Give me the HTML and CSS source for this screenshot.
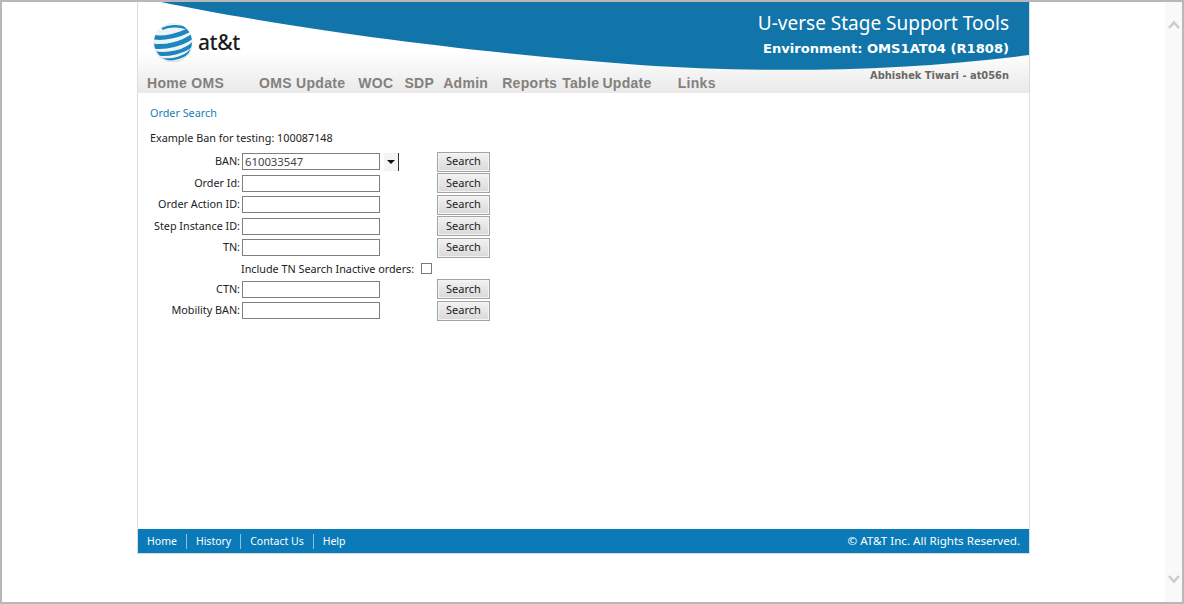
FILE: index.html
```html
<!DOCTYPE html>
<html lang="en">
<head>
  <meta charset="UTF-8">
  <title>U-verse Stage Support Tools | Order Search</title>
  <link rel="stylesheet" href="styles.css">
</head>
<body>
  <div class="window">
    <div class="viewport">
      <div class="page">
        <header class="masthead">
          <svg class="swoosh" viewBox="0 0 891 70" width="891" height="70" aria-hidden="true">
            <path d="M23 0C130 22 300 48 502 63C620 71 760 70 891 53L891 0Z" fill="#1275a9"/>
          </svg>
          <div class="masthead-top">
            <div class="logo">
              <svg class="globe" viewBox="0 0 40 40" width="40" height="40" aria-hidden="true">
                <defs>
                  <clipPath id="globe-clip"><circle cx="20" cy="20" r="19"/></clipPath>
                </defs>
                <circle cx="20" cy="21" r="19.5" fill="#dfe3e6"/>
                <circle cx="20" cy="20" r="19" fill="#eef3f6"/>
                <g clip-path="url(#globe-clip)" fill="none" stroke="#1b86bf">
                  <path d="M9 7C15 4 25 3 33 6" stroke-width="2.5"/>
                  <path d="M0 15C10 17 26 14 38 7" stroke-width="4.5"/>
                  <path d="M0 24C12 26 30 22 41 13" stroke-width="5"/>
                  <path d="M1 31C14 34 32 30 41 21" stroke-width="4"/>
                  <path d="M9 37C20 39 32 35 38 28" stroke-width="2.5"/>
                </g>
              </svg>
              <span class="logo-text">at&amp;t</span>
            </div>
            <div class="titles">
              <div class="app-title">U-verse Stage Support Tools</div>
              <div class="env-title">Environment: OMS1AT04 (R1808)</div>
            </div>
          </div>
          <div class="masthead-bottom">
            <nav class="main-nav">
              <a class="nav-home">Home OMS</a>
              <a class="nav-update">OMS Update</a>
              <a class="nav-woc">WOC</a>
              <a class="nav-sdp">SDP</a>
              <a class="nav-admin">Admin</a>
              <a class="nav-reports">Reports</a>
              <a class="nav-table">Table Update</a>
              <a>Links</a>
            </nav>
            <div class="user-name">Abhishek Tiwari - at056n</div>
          </div>
        </header>

        <main class="content">
          <h1 class="page-title">Order Search</h1>
          <p class="example">Example Ban for testing: 100087148</p>

          <form class="search-form">
            <div class="form-row">
              <label class="field-label">BAN:</label>
              <input class="field-input" type="text" value="610033547">
              <span class="drop-btn"><span class="drop-arrow"></span></span>
              <button class="search-btn" type="button">Search</button>
            </div>
            <div class="form-row">
              <label class="field-label">Order Id:</label>
              <input class="field-input" type="text">
              <button class="search-btn" type="button">Search</button>
            </div>
            <div class="form-row">
              <label class="field-label">Order Action ID:</label>
              <input class="field-input" type="text">
              <button class="search-btn" type="button">Search</button>
            </div>
            <div class="form-row">
              <label class="field-label">Step Instance ID:</label>
              <input class="field-input" type="text">
              <button class="search-btn" type="button">Search</button>
            </div>
            <div class="form-row">
              <label class="field-label">TN:</label>
              <input class="field-input" type="text">
              <button class="search-btn" type="button">Search</button>
            </div>
            <div class="form-row check-row">
              <label class="check-label">Include TN Search Inactive orders:</label>
              <span class="check-box"></span>
            </div>
            <div class="form-row">
              <label class="field-label">CTN:</label>
              <input class="field-input" type="text">
              <button class="search-btn" type="button">Search</button>
            </div>
            <div class="form-row">
              <label class="field-label">Mobility BAN:</label>
              <input class="field-input" type="text">
              <button class="search-btn" type="button">Search</button>
            </div>
          </form>
        </main>

        <footer class="site-footer">
          <ul class="footer-links">
            <li>Home</li>
            <li>History</li>
            <li>Contact Us</li>
            <li>Help</li>
          </ul>
          <div class="copyright">© AT&amp;T Inc. All Rights Reserved.</div>
        </footer>
      </div>
    </div>

    <div class="scrollbar">
      <svg viewBox="0 0 12 9" width="12" height="9" aria-hidden="true"><path d="M1 8L6 2.5L11 8" fill="none" stroke="#cccccc" stroke-width="2.6"/></svg>
      <svg viewBox="0 0 12 9" width="12" height="9" aria-hidden="true"><path d="M1 1L6 6.5L11 1" fill="none" stroke="#cccccc" stroke-width="2.6"/></svg>
    </div>
  </div>
</body>
</html>
```

FILE: styles.css
```css
/* Outer window frame */
html, body {
  margin: 0;
  padding: 0;
  height: 100%;
  overflow: hidden;
}
body {
  background-color: #fff;
  color: #222;
  font-family: "Noto Sans", "Open Sans", sans-serif;
  font-size: 10.8px;
}
.window {
  box-sizing: border-box;
  height: 604px;
  border: 2px solid #b8b8b8;
  display: flex;
}
.viewport {
  flex: 1;
  padding-left: 135px;
}
.scrollbar {
  width: 17px;
  background-color: #f9f9f9;
  display: flex;
  flex-direction: column;
  justify-content: space-between;
  align-items: center;
  padding: 18px 0;
  box-sizing: border-box;
}

/* Page box */
.page {
  box-sizing: content-box;
  width: 891px;
  height: 551px;
  border: 1px solid #dcdcdc;
  border-top: none;
  display: flex;
  flex-direction: column;
}

/* Header with the blue swoosh */
.masthead {
  position: relative;
  height: 91px;
  background: linear-gradient(to bottom, #fff 0, #fff 50px, #e9e9e9 91px);
  display: flex;
  flex-direction: column;
}
.swoosh {
  position: absolute;
  top: 0;
  left: 0;
}
.masthead-top {
  position: relative;
  height: 65px;
  display: flex;
  justify-content: space-between;
}
.logo {
  display: flex;
  align-items: center;
  padding: 19px 0 0 15px;
  height: 42px;
}
.logo-text {
  margin-left: 5px;
  font-size: 21px;
  font-weight: 500;
  color: #1c1c1c;
  letter-spacing: -0.4px;
}
.titles {
  text-align: right;
  padding: 8px 20px 0 0;
  color: #fff;
}
.app-title {
  font-size: 19px;
  line-height: 27px;
}
.env-title {
  font-family: "DejaVu Sans", sans-serif;
  font-size: 13.1px;
  font-weight: bold;
  line-height: 23px;
}
.masthead-bottom {
  position: relative;
  flex: 1;
  display: flex;
  justify-content: space-between;
}
.main-nav {
  display: flex;
  padding: 8px 0 0 9px;
  font-family: "Liberation Sans", Arial, sans-serif;
  font-size: 14px;
  font-weight: bold;
  letter-spacing: 0.3px;
  color: #83807d;
}
.nav-home { margin-right: 35px; }
.nav-update { margin-right: 13px; }
.nav-woc { margin-right: 11px; }
.nav-sdp { margin-right: 9px; }
.nav-admin { margin-right: 14px; }
.nav-reports { margin-right: 5px; }
.nav-table { margin-right: 26px; word-spacing: -1px; }
.user-name {
  font-family: "DejaVu Sans", sans-serif;
  font-size: 9.9px;
  font-weight: bold;
  color: #6b6766;
  padding: 3px 20px 0 0;
}

/* Main content */
.content {
  flex: 1;
  padding: 0 0 0 12px;
}
.page-title {
  margin: 12px 0 0;
  font-size: 10.8px;
  font-weight: normal;
  line-height: 15px;
  color: #1a7db5;
}
.example {
  margin: 10px 0 0;
  line-height: 15px;
}
.search-form {
  margin-top: 6px;
}
.form-row {
  display: flex;
  align-items: flex-start;
  height: 21.5px;
  position: relative;
}
.check-row {
  height: 20px;
}
.field-label {
  width: 90px;
  text-align: right;
  line-height: 19px;
  white-space: nowrap;
}
.check-label {
  margin-left: 91px;
  width: 180px;
  line-height: 19px;
  white-space: nowrap;
}
.field-input {
  box-sizing: border-box;
  width: 138px;
  height: 17px;
  margin: 2px 0 0 2px;
  padding: 0 1px 0 2px;
  border: 1px solid #7f7f7f;
  border-radius: 0;
  outline: none;
  font-family: inherit;
  font-size: 11.3px;
  color: #444;
}
.drop-btn {
  box-sizing: border-box;
  position: absolute;
  left: 234px;
  top: 2px;
  width: 15px;
  height: 18px;
  border-right: 1px solid #333;
  background-color: #f4f4f4;
  display: flex;
  align-items: center;
  justify-content: center;
}
.drop-arrow {
  width: 0;
  height: 0;
  border-left: 4px solid transparent;
  border-right: 4px solid transparent;
  border-top: 4px solid #111;
}
.search-btn {
  box-sizing: border-box;
  position: absolute;
  left: 287px;
  top: 0.5px;
  width: 53px;
  height: 20px;
  padding: 0 0 2px;
  border: 1px solid #a3a3a3;
  box-shadow: inset 0 0 0 1px #f4f4f4;
  background: linear-gradient(to bottom, #f2f2f2, #d9d9d9);
  font-family: inherit;
  font-size: 11px;
  color: #222;
}
.check-box {
  box-sizing: border-box;
  width: 11px;
  height: 11px;
  margin-top: 4px;
  border: 1px solid #7a7a7a;
  background-color: #fff;
}

/* Footer */
.site-footer {
  box-sizing: border-box;
  height: 24px;
  padding-bottom: 1px;
  background-color: #0a7ab8;
  color: #fff;
  font-size: 11.6px;
  display: flex;
  justify-content: space-between;
  align-items: center;
}
.footer-links {
  list-style: none;
  margin: 1px 0 0;
  padding: 0 0 0 9px;
  display: flex;
  font-size: 10.5px;
}
.footer-links li {
  padding: 0 9px;
  line-height: 15px;
  border-left: 1px solid #8cc0de;
}
.footer-links li:first-child {
  padding-left: 0;
  border-left: none;
}
.copyright {
  padding-right: 9px;
}
```
